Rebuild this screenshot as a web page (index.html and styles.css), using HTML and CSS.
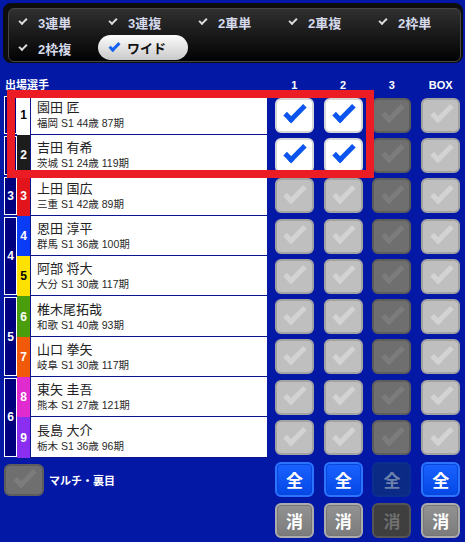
FILE: index.html
```html
<!DOCTYPE html>
<html lang="ja">
<head>
    <meta charset="UTF-8">
    <title>投票 - ワイド</title>
    <link rel="stylesheet" href="styles.css">
</head>
<body>
<div class="bet-types">
    <div class="bet-types-inner">
        <span class="bet-type">3連単</span>
        <span class="bet-type">3連複</span>
        <span class="bet-type">2車単</span>
        <span class="bet-type">2車複</span>
        <span class="bet-type">2枠単</span>
        <span class="bet-type">2枠複</span>
        <span class="bet-type active">ワイド</span>
    </div>
</div>
<div class="board">
    <div class="board-title">出場選手</div>
    <div class="col-title">1</div>
    <div class="col-title">2</div>
    <div class="col-title">3</div>
    <div class="col-title">BOX</div>

    <div class="frame">1</div>
    <div class="num n1">1</div>
    <div class="racer"><b>園田 匠</b><small>福岡 S1 44歳 87期</small></div>
    <span class="box on"></span><span class="box on"></span><span class="box dim"></span><span class="box"></span>

    <div class="frame">2</div>
    <div class="num n2">2</div>
    <div class="racer"><b>吉田 有希</b><small>茨城 S1 24歳 119期</small></div>
    <span class="box on"></span><span class="box on"></span><span class="box dim"></span><span class="box"></span>

    <div class="frame">3</div>
    <div class="num n3">3</div>
    <div class="racer"><b>上田 国広</b><small>三重 S1 42歳 89期</small></div>
    <span class="box"></span><span class="box"></span><span class="box dim"></span><span class="box"></span>

    <div class="frame span2">4</div>
    <div class="num n4">4</div>
    <div class="racer"><b>恩田 淳平</b><small>群馬 S1 36歳 100期</small></div>
    <span class="box"></span><span class="box"></span><span class="box dim"></span><span class="box"></span>

    <div class="num n5">5</div>
    <div class="racer"><b>阿部 将大</b><small>大分 S1 30歳 117期</small></div>
    <span class="box"></span><span class="box"></span><span class="box dim"></span><span class="box"></span>

    <div class="frame span2">5</div>
    <div class="num n6">6</div>
    <div class="racer"><b>椎木尾拓哉</b><small>和歌 S1 40歳 93期</small></div>
    <span class="box"></span><span class="box"></span><span class="box dim"></span><span class="box"></span>

    <div class="num n7">7</div>
    <div class="racer"><b>山口 拳矢</b><small>岐阜 S1 30歳 117期</small></div>
    <span class="box"></span><span class="box"></span><span class="box dim"></span><span class="box"></span>

    <div class="frame span2">6</div>
    <div class="num n8">8</div>
    <div class="racer"><b>東矢 圭吾</b><small>熊本 S1 27歳 121期</small></div>
    <span class="box"></span><span class="box"></span><span class="box dim"></span><span class="box"></span>

    <div class="num n9">9</div>
    <div class="racer"><b>長島 大介</b><small>栃木 S1 36歳 96期</small></div>
    <span class="box"></span><span class="box"></span><span class="box dim"></span><span class="box"></span>

    <label class="multi"><span class="box dim"></span>マルチ・裏目</label>
    <span class="btn all">全</span>
    <span class="btn all">全</span>
    <span class="btn all off">全</span>
    <span class="btn all">全</span>
    <span class="btn clear">消</span>
    <span class="btn clear">消</span>
    <span class="btn clear off">消</span>
    <span class="btn clear">消</span>

    <div class="pick-mark"></div>
</div>
</body>
</html>
```

FILE: styles.css
```css
body{
    margin: 0;
    width: 465px;
    height: 542px;
    overflow: hidden;
    background: #0319a6;
    color: #fff;
    font-family: "Liberation Sans", "Noto Sans CJK JP", sans-serif;
}

/* bet type selector */
.bet-types{
    margin: 3px 2px 0 3px;
    padding: 5px 2px 1px 5px;
    background: #0d0d0d;
    border-radius: 8px;
}
.bet-types-inner{
    display: grid;
    grid-template-columns: repeat(5, 90px);
    grid-auto-rows: 26px;
    border: 1px solid #474747;
    border-radius: 6px;
    background: linear-gradient(#303030, #020202);
}
.bet-type{
    display: flex;
    align-items: center;
    gap: 11px;
    padding-left: 10px;
    font-size: 13px;
    font-weight: bold;
    color: #d6daec;
}
.bet-type::before{
    content: "";
    box-sizing: border-box;
    width: 8px;
    height: 5px;
    margin-top: -3px;
    border-left: 2px solid #dcdcdc;
    border-bottom: 2px solid #dcdcdc;
    transform: rotate(-45deg);
}
.bet-type.active{
    margin: 0 1px 1px -1px;
    padding-left: 11px;
    gap: 7px;
    border-radius: 13px;
    background: linear-gradient(#fdfdfd, #c9c9c9);
    color: #111;
}
.bet-type.active::before{
    width: 11px;
    height: 6px;
    border-width: 0 0 3px 3px;
    border-color: #1560f0;
}

/* entry board */
.board{
    position: relative;
    display: grid;
    grid-template-columns: 13px 13px 240px repeat(4, 1fr);
    grid-template-rows: 32px repeat(9, 40.3px) 42px 41px;
    padding-left: 4px;
}
.board-title,
.col-title{
    align-self: end;
    padding-bottom: 3px;
    font-size: 11px;
    line-height: 14px;
    font-weight: bold;
}
.board-title{
    grid-column: 1 / 4;
    margin-left: 1px;
}
.col-title{
    text-align: center;
}

.frame{
    grid-column: 1;
    margin: 1px 0;
    border: 1px solid #fff;
    background: #00007e;
    display: flex;
    align-items: center;
    justify-content: center;
    font-size: 12px;
    font-weight: bold;
}
.frame.span2{
    grid-row: span 2;
}

.num{
    grid-column: 2;
    display: flex;
    align-items: center;
    justify-content: center;
    font-size: 12px;
    font-weight: bold;
}
.n1{ background: #fff; color: #000; }
.n2{ background: #1c1c1c; }
.n3{ background: #e3151c; }
.n4{ background: #0b3cf5; }
.n5{ background: #ffe100; color: #000; }
.n6{ background: #4a9d0c; }
.n7{ background: #f15a0a; }
.n8{ background: #e02ccf; }
.n9{ background: #8a2ff0; }

.racer{
    grid-column: 3;
    margin-right: 3px;
    padding-left: 6px;
    display: flex;
    flex-direction: column;
    justify-content: center;
    gap: 3px;
    background: #fff;
    border-left: 1px solid #0b158f;
    border-bottom: 1px solid #0b158f;
    color: #222;
}
.racer b{
    font-weight: normal;
    font-size: 13px;
    line-height: 15px;
}
.racer small{
    font-size: 10.5px;
    line-height: 11px;
    color: #2a2a2a;
}

/* check boxes */
.box{
    position: relative;
    justify-self: center;
    align-self: center;
    box-sizing: border-box;
    width: 39px;
    height: 35px;
    border: 2px solid #a3a3a3;
    border-radius: 6px;
    background: #bfbfbf;
}
.box::after{
    content: "";
    position: absolute;
    left: 50%;
    top: 50%;
    box-sizing: border-box;
    width: 22px;
    height: 11px;
    margin: -9px 0 0 -10px;
    border-left: 5px solid #d3d3d3;
    border-bottom: 5px solid #d3d3d3;
    transform: rotate(-45deg);
}
.box.on{
    background: #fff;
    border-color: #d8d8d8;
}
.box.on::after{
    border-color: #0b55ee;
}
.box.dim{
    background: #6f6f6f;
    border-color: #5d5d5d;
}
.box.dim::after{
    border-color: #7c7c7c;
}

.multi{
    grid-column: 1 / 4;
    grid-row: span 2;
    align-self: start;
    margin-top: 6px;
    display: flex;
    align-items: center;
    gap: 5px;
    font-size: 11px;
    font-weight: bold;
}
.multi .box{
    width: 40px;
    height: 32px;
}

/* select all / clear buttons */
.btn{
    justify-self: center;
    align-self: start;
    box-sizing: border-box;
    width: 39px;
    height: 35px;
    border: 2px solid;
    border-radius: 6px;
    display: flex;
    align-items: center;
    justify-content: center;
    font-family: "Noto Sans CJK JP", sans-serif;
    font-size: 17px;
    font-weight: bold;
}
.all{
    margin-top: 4px;
    border-color: #2a74ff;
    background: linear-gradient(#1a62ff, #0448e6);
    box-shadow: inset 0 0 0 1px #0a46d8;
}
.all.off{
    border-color: #0c2f8e;
    background: #0a2a86;
    box-shadow: none;
    color: #6d7fab;
}
.clear{
    margin-top: 3px;
    border-color: #acacac;
    background: linear-gradient(#939393, #7b7b7b);
    box-shadow: inset 0 0 0 1px #777;
}
.clear.off{
    border-color: #555;
    background: #3f3f3f;
    box-shadow: none;
    color: #707070;
}

/* highlight frame drawn over the first two racers */
.pick-mark{
    position: absolute;
    left: 7px;
    top: 27px;
    width: 367px;
    height: 88px;
    box-sizing: border-box;
    border: 8px solid #ec1c24;
    pointer-events: none;
}
```
